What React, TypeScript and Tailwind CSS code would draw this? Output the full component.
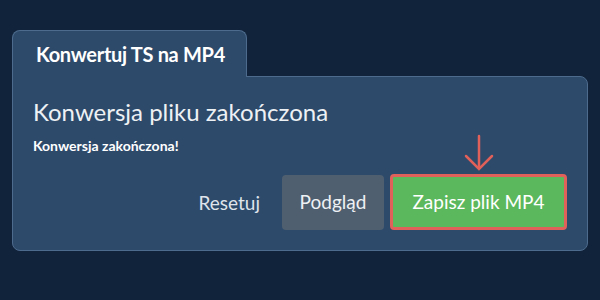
import { useState } from 'react';

export default function App() {
  const [done] = useState(true);

  return (
    <div className="w-[600px] h-[300px] bg-[#10233a] pt-[30px] px-[12px] font-['Lato','Liberation_Sans',sans-serif]">
      {/* Tab header */}
      <div className="relative z-10 -mb-px flex">
        <div className="h-[47px] w-[235px] flex items-center pl-[23px] bg-[#2d4a6b] border border-b-0 border-[#4d6b8d] rounded-t-lg">
          <span className="text-white font-bold text-[20px] tracking-[-0.3px]">Konwertuj TS na MP4</span>
        </div>
      </div>

      {/* Panel */}
      <div className="h-[175px] bg-[#2d4a6b] border border-[#4d6b8d] rounded-b-lg rounded-tr-lg px-[20px] pt-[20px]">
        <h2 className="text-[#eef1f4] text-[24px] leading-[30px]">Konwersja pliku zakończona</h2>
        {done && (
          <p className="mt-[10px] text-white font-bold text-[14px] leading-[18px]">Konwersja zakończona!</p>
        )}

        <div className="mt-[19px] flex items-center justify-end gap-[6px]">
          <button className="mr-[16px] text-[#dfe4ea] text-[19px] leading-none">Resetuj</button>
          <button className="w-[102px] h-[55px] rounded bg-[#4f5f70] text-[#eef1f4] text-[19px]">Podgląd</button>
          <div className="relative">
            {/* Hint arrow */}
            <svg
              className="absolute left-[73px] -top-[40px]"
              width="32"
              height="38"
              viewBox="0 0 32 38"
              fill="none"
              stroke="#e0605a"
              strokeWidth="2.5"
              strokeLinecap="round"
            >
              <path d="M16 2 V34" />
              <path d="M3 22 L16 35 L29 22" />
            </svg>
            <button className="w-[177px] h-[56px] rounded border-[3px] border-[#e0605a] bg-[#5cb85c] text-white text-[19px]">
              Zapisz plik MP4
            </button>
          </div>
        </div>
      </div>
    </div>
  );
}
